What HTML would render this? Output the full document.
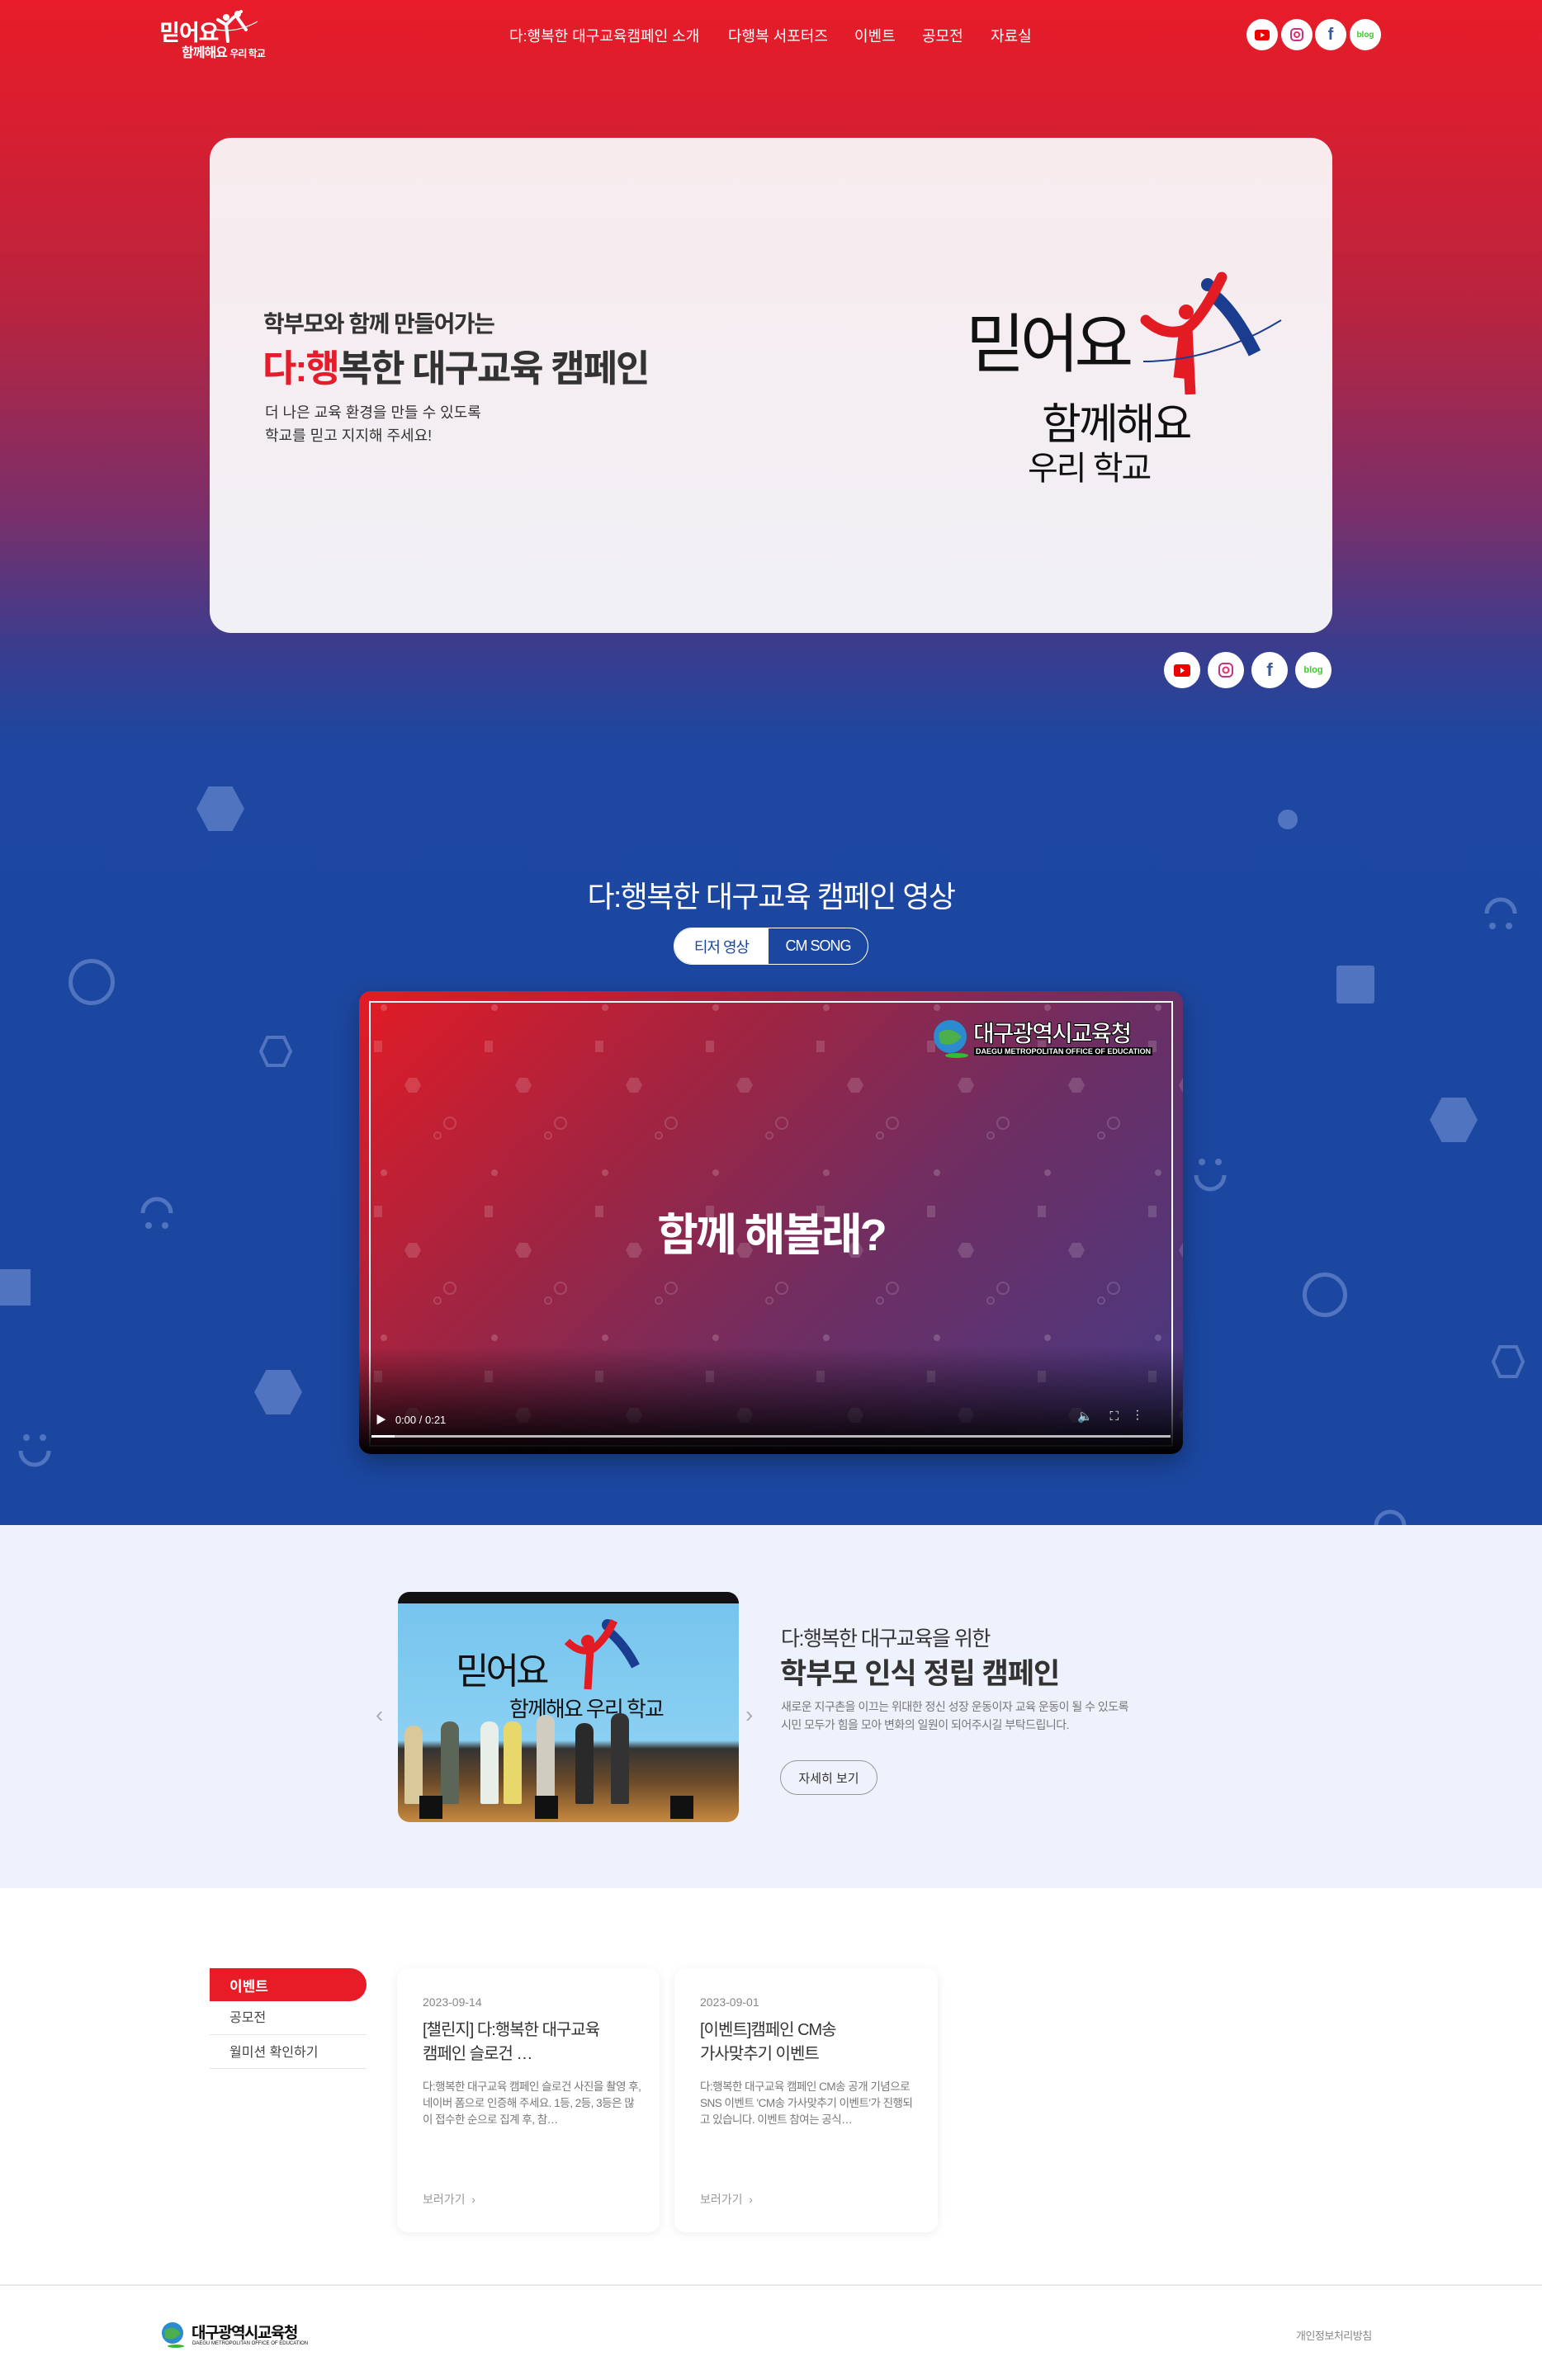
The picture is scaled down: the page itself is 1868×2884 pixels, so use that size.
<!DOCTYPE html>
<html lang="ko"><head><meta charset="utf-8">
<style>
*{margin:0;padding:0;box-sizing:border-box}
body{width:1868px;height:2884px;position:relative;overflow:hidden;font-family:"Liberation Sans","Noto Sans CJK KR",sans-serif;background:#fff}
.abs{position:absolute}
.top{left:0;top:0;width:1868px;height:1848px;background:linear-gradient(180deg,#e81c28 0px,#d41f32 180px,#b7243f 380px,#7a2f6a 620px,#3c3c8d 780px,#1d47a0 900px,#1b47a0 1848px)}
.nav{top:30px;font-size:18px;color:#fff;white-space:nowrap}
.sns{width:38px;height:38px;border-radius:50%;background:#fff;display:flex;align-items:center;justify-content:center}
.sns2{width:44px;height:44px}
.deco{position:absolute;background:#5174c0}
.hex{clip-path:polygon(25% 0,75% 0,100% 50%,75% 100%,25% 100%,0 50%)}
.ring{position:absolute;border:5px solid #5174c0;border-radius:50%}
.card{background:#fff;border-radius:14px;box-shadow:0 2px 12px rgba(0,0,0,.07)}
.p{position:absolute;bottom:22px;width:22px;border-radius:10px 10px 2px 2px}
</style></head><body>
<div class="abs top"></div>

<!-- header -->
<div class="abs" style="left:193px;top:18px;color:#fff;font-size:27px;font-weight:bold;letter-spacing:-1px">믿어요</div>
<svg class="abs" style="left:258px;top:12px" width="56" height="40" viewBox="0 0 56 40"><circle cx="16" cy="9" r="4" fill="#fff"/><circle cx="30" cy="5" r="4" fill="#fff"/><path d="M6 12 L16 18 L24 10 L34 2 M16 18 L18 38 M30 10 L40 24" stroke="#fff" stroke-width="4" fill="none" stroke-linecap="round"/><path d="M4 24 Q30 28 54 14" stroke="#fff" stroke-width="1.2" fill="none"/></svg>
<div class="abs" style="left:220px;top:50px;color:#fff;font-size:16px;font-weight:bold;letter-spacing:-1px">함께해요 <span style="font-size:12px">우리 학교</span></div>

<div class="abs nav" style="left:617px">다:행복한 대구교육캠페인 소개</div>
<div class="abs nav" style="left:882px">다행복 서포터즈</div>
<div class="abs nav" style="left:1035px">이벤트</div>
<div class="abs nav" style="left:1117px">공모전</div>
<div class="abs nav" style="left:1200px">자료실</div>

<div class="abs sns" style="left:1510px;top:23px"><svg width="18" height="13"><rect width="18" height="13" rx="3" fill="#e00"/><path d="M7 3.5 L12 6.5 L7 9.5Z" fill="#fff"/></svg></div>
<div class="abs sns" style="left:1552px;top:23px"><svg width="16" height="16"><rect x="1" y="1" width="14" height="14" rx="4" fill="none" stroke="#c13584" stroke-width="2"/><circle cx="8" cy="8" r="3" fill="none" stroke="#e1306c" stroke-width="2"/></svg></div>
<div class="abs sns" style="left:1593px;top:23px;color:#3b5998;font-weight:bold;font-size:20px">f</div>
<div class="abs sns" style="left:1635px;top:23px;color:#3ec82e;font-weight:bold;font-size:10px">blog</div>

<!-- hero card -->
<div class="abs" style="left:254px;top:167px;width:1360px;height:600px;border-radius:26px;background:linear-gradient(180deg,#f8ebee,#f0f0f5)"></div>
<div class="abs" style="left:319px;top:371px;font-size:28px;font-weight:bold;color:#333;letter-spacing:-1.5px">학부모와 함께 만들어가는</div>
<div class="abs" style="left:318px;top:410px;font-size:45px;font-weight:bold;color:#333;letter-spacing:-2px"><span style="color:#e51d2b">다:행</span>복한 대구교육 캠페인</div>
<div class="abs" style="left:321px;top:486px;font-size:18px;color:#333;line-height:28px">더 나은 교육 환경을 만들 수 있도록<br>학교를 믿고 지지해 주세요!</div>
<div class="abs" style="left:1170px;top:378px;font-size:78px;color:#111;letter-spacing:-6px;line-height:1">믿어요</div>
<svg class="abs" style="left:1380px;top:328px" width="175" height="150" viewBox="0 0 175 150"><circle cx="57" cy="50" r="9" fill="#e31b23"/><circle cx="83" cy="17" r="8" fill="#1a3d8f"/><path d="M90 30 Q115 50 140 100" stroke="#1a3d8f" stroke-width="16" fill="none"/><path d="M8 60 Q30 80 55 72 Q75 60 100 8" stroke="#e31b23" stroke-width="13" fill="none" stroke-linecap="round"/><path d="M55 70 L48 130 M58 70 L62 150" stroke="#e31b23" stroke-width="13" fill="none"/><path d="M5 110 Q90 110 172 60" stroke="#1a3d8f" stroke-width="2" fill="none"/></svg>
<div class="abs" style="left:1262px;top:472px;font-size:52px;color:#111;letter-spacing:-3px">함께해요</div>
<div class="abs" style="left:1245px;top:535px;font-size:40px;color:#111;letter-spacing:-2px">우리 학교</div>

<div class="abs sns sns2" style="left:1410px;top:790px"><svg width="20" height="15"><rect width="20" height="15" rx="3" fill="#e00"/><path d="M8 4 L13 7.5 L8 11Z" fill="#fff"/></svg></div>
<div class="abs sns sns2" style="left:1463px;top:790px"><svg width="18" height="18"><rect x="1" y="1" width="16" height="16" rx="5" fill="none" stroke="#c13584" stroke-width="2"/><circle cx="9" cy="9" r="3.5" fill="none" stroke="#e1306c" stroke-width="2"/></svg></div>
<div class="abs sns sns2" style="left:1516px;top:790px;color:#3b5998;font-weight:bold;font-size:22px">f</div>
<div class="abs sns sns2" style="left:1569px;top:790px;color:#3ec82e;font-weight:bold;font-size:11px">blog</div>

<!-- decorations -->
<div class="deco hex" style="left:238px;top:953px;width:58px;height:54px"></div>
<div class="deco" style="left:1548px;top:981px;width:24px;height:24px;border-radius:50%"></div>
<div class="ring" style="left:83px;top:1162px;width:56px;height:56px"></div>
<svg class="abs" style="left:313px;top:1254px" width="42" height="40"><polygon points="11,3 31,3 39,20 31,37 11,37 3,20" fill="none" stroke="#5174c0" stroke-width="4"/></svg>
<div class="deco" style="left:1619px;top:1170px;width:46px;height:46px;border-radius:3px"></div>
<div class="deco hex" style="left:1732px;top:1330px;width:58px;height:54px"></div>
<div class="deco" style="left:0;top:1538px;width:37px;height:44px"></div>
<div class="ring" style="left:1578px;top:1542px;width:54px;height:54px"></div>
<svg class="abs" style="left:1806px;top:1629px" width="42" height="42"><polygon points="11,3 31,3 39,21 31,39 11,39 3,21" fill="none" stroke="#5174c0" stroke-width="4"/></svg>
<div class="deco hex" style="left:308px;top:1660px;width:58px;height:54px"></div>
<svg class="abs" style="left:1795px;top:1083px" width="46" height="48"><path d="M6 24 A17 17 0 0 1 40 24" stroke="#5174c0" stroke-width="5" fill="none"/><circle cx="13" cy="39" r="4" fill="#5174c0"/><circle cx="33" cy="39" r="4" fill="#5174c0"/></svg>
<svg class="abs" style="left:1443px;top:1400px" width="46" height="50"><circle cx="13" cy="8" r="4" fill="#5174c0"/><circle cx="33" cy="8" r="4" fill="#5174c0"/><path d="M6 24 A17 17 0 0 0 40 24" stroke="#5174c0" stroke-width="5" fill="none"/></svg>
<svg class="abs" style="left:167px;top:1446px" width="46" height="48"><path d="M6 24 A17 17 0 0 1 40 24" stroke="#5174c0" stroke-width="5" fill="none"/><circle cx="13" cy="39" r="4" fill="#5174c0"/><circle cx="33" cy="39" r="4" fill="#5174c0"/></svg>
<svg class="abs" style="left:19px;top:1734px" width="46" height="50"><circle cx="13" cy="8" r="4" fill="#5174c0"/><circle cx="33" cy="8" r="4" fill="#5174c0"/><path d="M6 24 A17 17 0 0 0 40 24" stroke="#5174c0" stroke-width="5" fill="none"/></svg>
<svg class="abs" style="left:1661px;top:1825px" width="46" height="24"><path d="M6 24 A17 17 0 0 1 40 24" stroke="#5174c0" stroke-width="5" fill="none"/></svg>

<!-- video section -->
<div class="abs" style="left:0;top:1058px;width:1868px;text-align:center;color:#fff;font-size:36px;letter-spacing:-1.5px">다:행복한 대구교육 캠페인 영상</div>
<div class="abs" style="left:816px;top:1124px;width:236px;height:45px;border:1.5px solid #fff;border-radius:23px;overflow:hidden;display:flex;font-size:18px;letter-spacing:-1px">
<div style="width:114px;background:#fff;color:#1b47a0;display:flex;align-items:center;justify-content:center">티저 영상</div>
<div style="flex:1;color:#fff;display:flex;align-items:center;justify-content:center">CM SONG</div></div>

<div class="abs" style="left:435px;top:1201px;width:998px;height:561px;border-radius:14px;overflow:hidden;background:linear-gradient(135deg,#e31b25 0%,#9c2544 35%,#6f2e62 60%,#433a86 100%);box-shadow:0 10px 30px rgba(0,0,0,.3)">
<svg class="abs" style="left:0;top:0" width="998" height="561"><defs><pattern id="pt" width="134" height="200" patternUnits="userSpaceOnUse"><circle cx="30" cy="20" r="4" fill="rgba(255,255,255,.18)"/><rect x="18" y="60" width="10" height="14" fill="rgba(255,255,255,.15)"/><polygon points="60,105 70,105 75,114 70,123 60,123 55,114" fill="rgba(255,255,255,.15)"/><circle cx="110" cy="160" r="7" fill="none" stroke="rgba(255,255,255,.15)" stroke-width="2"/><circle cx="95" cy="175" r="4" fill="none" stroke="rgba(255,255,255,.15)" stroke-width="2"/></pattern></defs><rect width="998" height="561" fill="url(#pt)"/></svg>
<div class="abs" style="left:12px;top:12px;width:974px;height:540px;border:2px solid #fff"></div>
<div class="abs" style="left:0;bottom:0;width:998px;height:130px;background:linear-gradient(180deg,rgba(0,0,0,0),#000)"></div>
<div class="abs" style="left:0;top:251px;width:998px;text-align:center;color:#fff;font-size:54px;font-weight:bold;letter-spacing:-3px">함께 해볼래?</div>
<svg class="abs" style="left:694px;top:33px" width="48" height="50"><circle cx="22" cy="22" r="20" fill="#2a8bd0"/><path d="M8 18 Q22 8 36 22 Q26 36 10 30Z" fill="#4cae4c"/><ellipse cx="30" cy="45" rx="14" ry="3" fill="#3b3"/></svg>
<div class="abs" style="left:744px;top:30px;color:#fff;font-size:28px;font-weight:bold;letter-spacing:-2px;-webkit-text-stroke:1px #000">대구광역시교육청</div>
<div class="abs" style="left:745px;top:68px;color:#fff;font-size:9px;font-weight:bold;background:#000;padding:0 2px">DAEGU METROPOLITAN OFFICE OF EDUCATION</div>
<div class="abs" style="left:20px;top:509px;color:#fff;font-size:13px">▶&nbsp;&nbsp; 0:00 / 0:21</div>
<div class="abs" style="left:870px;top:506px;color:#fff;font-size:15px">🔈&nbsp;&nbsp;&nbsp;&nbsp;&nbsp;⛶&nbsp;&nbsp;&nbsp;&nbsp;&nbsp;⋮</div>
<div class="abs" style="left:15px;top:538px;width:968px;height:3px;background:#bbb"></div>
<div class="abs" style="left:15px;top:538px;width:28px;height:3px;background:#fff"></div>
</div>

<!-- campaign section -->
<div class="abs" style="left:0;top:1848px;width:1868px;height:440px;background:#eef2fd"></div>
<div class="abs" style="left:482px;top:1929px;width:413px;height:279px;border-radius:14px;overflow:hidden;background:linear-gradient(180deg,#111 0,#111 14px,#76c4ee 14px,#8ad0f2 180px,#333 190px,#6b4a2a 230px,#c7893f 279px)">
<div class="abs" style="left:70px;top:60px;font-size:44px;color:#111;letter-spacing:-4px">믿어요</div>
<div class="abs" style="left:135px;top:122px;font-size:26px;color:#111;letter-spacing:-2px">함께해요 우리 학교</div>
<svg class="abs" style="left:200px;top:30px" width="110" height="90"><circle cx="30" cy="30" r="8" fill="#e31b23"/><circle cx="54" cy="10" r="7" fill="#1a3d8f"/><path d="M58 20 Q75 35 88 60" stroke="#1a3d8f" stroke-width="11" fill="none"/><path d="M5 30 Q20 45 35 40 Q50 30 62 5 M33 40 L30 88" stroke="#e31b23" stroke-width="9" fill="none"/></svg>
<div class="p" style="left:8px;height:95px;background:#d8c89a"></div>
<div class="p" style="left:52px;height:100px;background:#5c6658"></div>
<div class="p" style="left:100px;height:100px;background:#e8eee8"></div>
<div class="p" style="left:128px;height:100px;background:#e8d76a"></div>
<div class="p" style="left:168px;height:108px;background:#d0ccc0"></div>
<div class="p" style="left:215px;height:98px;background:#2a2a2a"></div>
<div class="p" style="left:258px;height:110px;background:#333"></div>
<div class="abs" style="left:26px;bottom:4px;width:28px;height:28px;background:#111"></div>
<div class="abs" style="left:166px;bottom:4px;width:28px;height:28px;background:#111"></div>
<div class="abs" style="left:330px;bottom:4px;width:28px;height:28px;background:#111"></div>
</div>
<div class="abs" style="left:455px;top:2062px;color:#aab;font-size:28px">‹</div>
<div class="abs" style="left:903px;top:2062px;color:#aab;font-size:28px">›</div>
<div class="abs" style="left:946px;top:1966px;font-size:25px;color:#333;letter-spacing:-1.5px">다:행복한 대구교육을 위한</div>
<div class="abs" style="left:945px;top:2000px;font-size:35px;font-weight:bold;color:#333;letter-spacing:-1px">학부모 인식 정립 캠페인</div>
<div class="abs" style="left:946px;top:2057px;font-size:14px;color:#777;line-height:22px;letter-spacing:-.5px">새로운 지구촌을 이끄는 위대한 정신 성장 운동이자 교육 운동이 될 수 있도록<br>시민 모두가 힘을 모아 변화의 일원이 되어주시길 부탁드립니다.</div>
<div class="abs" style="left:945px;top:2133px;width:118px;height:42px;border:1px solid #999;border-radius:21px;font-size:15px;color:#333;display:flex;align-items:center;justify-content:center">자세히 보기</div>

<!-- events -->
<div class="abs" style="left:254px;top:2385px;width:190px;height:40px;background:#e81c27;border-radius:0 20px 20px 0;color:#fff;font-size:17px;font-weight:bold;padding:8px 0 0 24px">이벤트</div>
<div class="abs" style="left:278px;top:2431px;font-size:16px;color:#444">공모전</div>
<div class="abs" style="left:254px;top:2465px;width:190px;height:1px;background:#e5e5e5"></div>
<div class="abs" style="left:278px;top:2473px;font-size:16px;color:#444">월미션 확인하기</div>
<div class="abs" style="left:254px;top:2506px;width:190px;height:1px;background:#e5e5e5"></div>

<div class="abs card" style="left:481px;top:2385px;width:318px;height:320px">
<div class="abs" style="left:31px;top:33px;font-size:14px;color:#888">2023-09-14</div>
<div class="abs" style="left:31px;top:61px;font-size:20px;color:#333;line-height:29px;letter-spacing:-1px">[챌린지] 다:행복한 대구교육<br>캠페인 슬로건 …</div>
<div class="abs" style="left:31px;top:134px;width:265px;font-size:13.5px;color:#777;line-height:20px;letter-spacing:-.5px">다:행복한 대구교육 캠페인 슬로건 사진을 촬영 후, 네이버 폼으로 인증해 주세요. 1등, 2등, 3등은 많이 접수한 순으로 집계 후, 참…</div>
<div class="abs" style="left:31px;top:270px;font-size:14px;color:#999">보러가기 &nbsp;›</div>
</div>
<div class="abs card" style="left:817px;top:2385px;width:319px;height:320px">
<div class="abs" style="left:31px;top:33px;font-size:14px;color:#888">2023-09-01</div>
<div class="abs" style="left:31px;top:61px;font-size:20px;color:#333;line-height:29px;letter-spacing:-1px">[이벤트]캠페인 CM송<br>가사맞추기 이벤트</div>
<div class="abs" style="left:31px;top:134px;width:265px;font-size:13.5px;color:#777;line-height:20px;letter-spacing:-.5px">다:행복한 대구교육 캠페인 CM송 공개 기념으로 SNS 이벤트 'CM송 가사맞추기 이벤트'가 진행되고 있습니다. 이벤트 참여는 공식…</div>
<div class="abs" style="left:31px;top:270px;font-size:14px;color:#999">보러가기 &nbsp;›</div>
</div>

<!-- footer -->
<div class="abs" style="left:0;top:2768px;width:1868px;height:2px;background:#e8e8e8"></div>
<svg class="abs" style="left:193px;top:2812px" width="36" height="34"><circle cx="16" cy="15" r="13" fill="#2a8bd0"/><path d="M6 12 Q16 4 26 15 Q18 26 7 21Z" fill="#4cae4c"/><ellipse cx="20" cy="31" rx="10" ry="2" fill="#3b3"/></svg>
<div class="abs" style="left:232px;top:2812px;font-size:19px;font-weight:bold;color:#111;letter-spacing:-1.5px">대구광역시교육청</div>
<div class="abs" style="left:233px;top:2837px;font-size:6px;color:#111">DAEGU METROPOLITAN OFFICE OF EDUCATION</div>
<div class="abs" style="left:1570px;top:2820px;font-size:13px;color:#888;letter-spacing:-.5px">개인정보처리방침</div>
</body></html>
